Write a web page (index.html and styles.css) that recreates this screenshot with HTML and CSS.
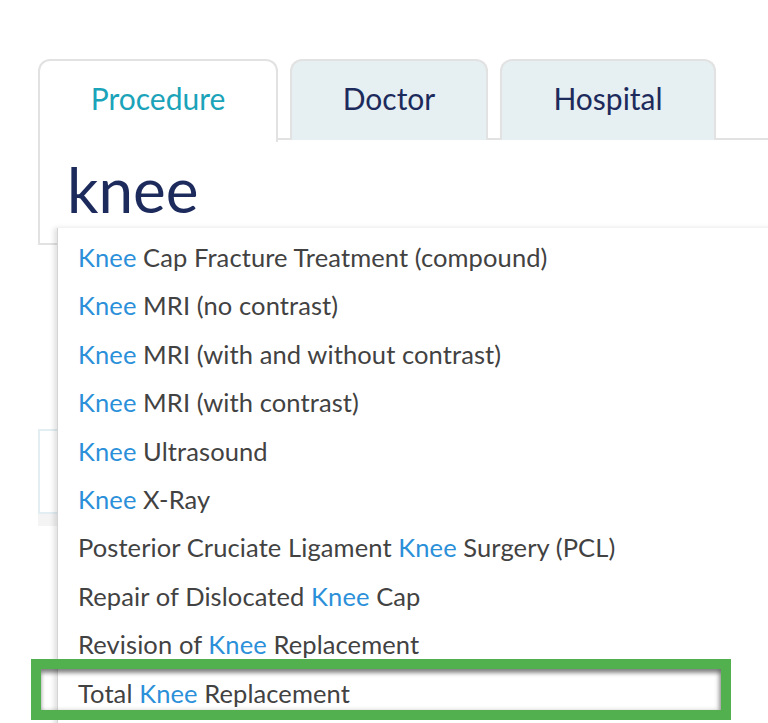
FILE: index.html
```html
<!DOCTYPE html>
<html lang="en">

<head>
    <meta charset="UTF-8">
    <meta name="viewport" content="width=device-width, initial-scale=1.0">
    <title>Find a Procedure</title>
    <link rel="stylesheet" href="styles.css">
</head>

<body>
    <div class="search">
        <div class="tabs">
            <div class="tab active">Procedure</div>
            <div class="tab">Doctor</div>
            <div class="tab">Hospital</div>
        </div>

        <div class="panel">
            <div class="query">knee</div>
        </div>

        <div class="filter-box"></div>
    </div>

    <ul class="suggestions">
        <li><span class="hl">Knee</span> Cap Fracture Treatment (compound)</li>
        <li><span class="hl">Knee</span> MRI (no contrast)</li>
        <li><span class="hl">Knee</span> MRI (with and without contrast)</li>
        <li><span class="hl">Knee</span> MRI (with contrast)</li>
        <li><span class="hl">Knee</span> Ultrasound</li>
        <li><span class="hl">Knee</span> X-Ray</li>
        <li>Posterior Cruciate Ligament <span class="hl">Knee</span> Surgery (PCL)</li>
        <li>Repair of Dislocated <span class="hl">Knee</span> Cap</li>
        <li>Revision of <span class="hl">Knee</span> Replacement</li>
        <li>Total <span class="hl">Knee</span> Replacement</li>
    </ul>

    <!-- highlight box drawn over the selected result -->
    <div class="callout"></div>
</body>
</html>
```

FILE: styles.css
```css
:root {
    --border: #e2e2e2;
    --tab-bg: #e6eff1;
    --teal: #1ba3b9;
    --navy: #1c2a5c;
    --blue: #2b90d9;
    --text: #424242;
    --green: #52b04f;
}

* {
    margin: 0;
    padding: 0;
    box-sizing: border-box;
}

body {
    font-family: Lato, 'Noto Sans', sans-serif;
    background: #ffffff;
    color: var(--text);
    overflow: hidden;
    height: 723px;
    position: relative;
}

.search {
    padding-top: 59px;
    margin-left: 38px;
    width: 760px;
}

.tabs {
    display: flex;
    gap: 12px;
    border-bottom: 2px solid var(--border);
    height: 81px;
}

.tab {
    height: 81px;
    border: 2px solid var(--border);
    border-bottom: none;
    border-radius: 12px 12px 0 0;
    background: var(--tab-bg);
    color: var(--navy);
    font-size: 30px;
    display: flex;
    justify-content: center;
    padding-top: 19px;
    width: 198px;
}

.tab.active {
    width: 240px;
    background: #ffffff;
    color: var(--teal);
    height: 83px;
}

.tab:last-child {
    width: 216px;
}

.panel {
    height: 107px;
    border-left: 2px solid var(--border);
    border-bottom: 2px solid var(--border);
    margin-top: -2px;
}

.query {
    font-size: 62px;
    color: var(--navy);
    padding: 20px 0 0 27px;
    line-height: 1;
}

.filter-box {
    margin-top: 184px;
    width: 60px;
    height: 85px;
    border: 2px solid #e3eef3;
    box-shadow: 0 12px 0 #f4f4f4;
}

.suggestions {
    list-style: none;
    position: absolute;
    left: 57px;
    top: 228px;
    width: 740px;
    height: 520px;
    background: #ffffff;
    border-left: 1px solid #d4d4d4;
    box-shadow: -3px 0 5px rgba(0, 0, 0, 0.12);
    padding-top: 5px;
}

.suggestions li {
    height: 48.4px;
    line-height: 48.4px;
    padding-left: 20px;
    font-size: 25.5px;
    letter-spacing: 0.1px;
    white-space: nowrap;
}

.hl {
    color: var(--blue);
}

.callout {
    position: absolute;
    left: 31px;
    top: 659px;
    width: 700px;
    height: 61px;
    border: 10px solid var(--green);
    box-shadow: inset 0 4px 4px rgba(0, 0, 0, 0.45), inset -3px 0 4px rgba(0, 0, 0, 0.2);
}
```
